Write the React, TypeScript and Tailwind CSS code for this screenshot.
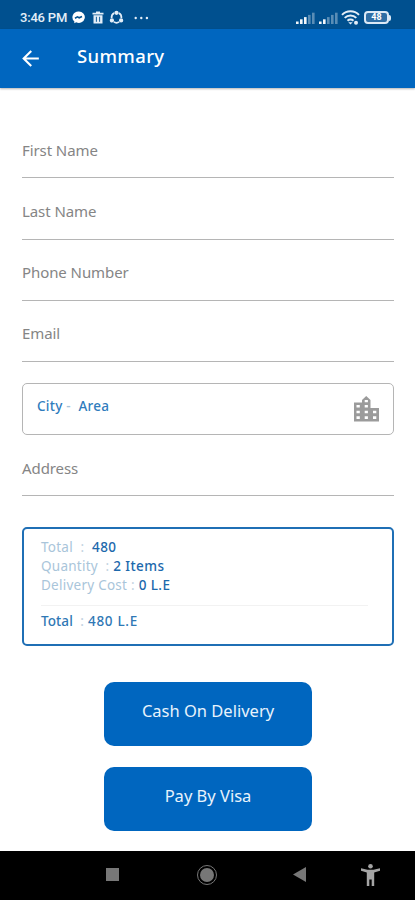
import * as React from 'react';
import { MdArrowBack } from 'react-icons/md';

function Signal({ strong }: { strong: number }) {
  return (
    <svg width="19" height="12" viewBox="0 0 19 12" fill="#fff">
      {[0, 1, 2, 3, 4].map((i) => (
        <rect key={i} x={i * 4} y={9.5 - i * 2.2} width="2.6" height={2.5 + i * 2.2} opacity={i < strong ? 0.95 : 0.35} />
      ))}
    </svg>
  );
}

function StatusBar() {
  return (
    <div className="h-[29px] bg-[#00508f] pt-[6px] pl-5 pr-[24px] flex items-center justify-between text-[#e3eef8]">
      <div className="flex items-center">
        <span className="w-[49px] whitespace-nowrap text-[13px] leading-4 font-medium font-[Roboto,sans-serif] tracking-[-0.2px]">3:46 PM</span>
        <svg className="ml-[3px]" width="13" height="13" viewBox="0 0 13 13">
          <path d="M6.5.5a6 5.7 0 0 0-4.2 9.8v2l1.9-1A6 5.7 0 1 0 6.5.5Z" fill="#fff" />
          <path d="m3 7.2 2.4-1.4 1.8 1L10 5.5" fill="none" stroke="#00508f" strokeWidth="1.6" />
        </svg>
        <svg className="ml-[7px]" width="12" height="13" viewBox="0 0 12 13" fill="currentColor">
          <path d="M4 .5h4v1.3h3.5v1.7H.5V1.8H4ZM1.5 4.2h9v8.3h-9Z" />
          <path d="M4.4 5.8v5M7.6 5.8v5" stroke="#00508f" strokeWidth="0.9" />
        </svg>
        <svg className="ml-[5px]" width="15" height="15" viewBox="0 0 15 15" fill="none" stroke="currentColor" strokeWidth="1.7">
          <path d="M5.2 3.1A5 5 0 0 0 2.6 8M9.8 3.1A5 5 0 0 1 12.4 8M4.8 11.9a5 5 0 0 0 5.4 0" />
          <circle cx="7.5" cy="2.8" r="1.3" fill="currentColor" />
          <circle cx="2.9" cy="10.4" r="1.3" fill="currentColor" />
          <circle cx="12.1" cy="10.4" r="1.3" fill="currentColor" />
        </svg>
        <svg className="ml-[10px]" width="15" height="4" viewBox="0 0 15 4" fill="currentColor">
          <circle cx="1.7" cy="2" r="1.2" />
          <circle cx="7.3" cy="2" r="1.2" />
          <circle cx="12.9" cy="2" r="1.2" />
        </svg>
      </div>
      <div className="flex items-center">
        <Signal strong={3} />
        <span className="w-1" />
        <Signal strong={2} />
        <svg className="ml-[3px]" width="19" height="15" viewBox="0 0 19 15" fill="none" stroke="currentColor" strokeWidth="2">
          <path d="M1 4.9a12 12 0 0 1 17 0M3.7 7.9a8.2 8.2 0 0 1 11.6 0M6.5 10.8a4.4 4.4 0 0 1 6 0" />
          <path d="m9.5 14.6-2.2-2.4h4.4Z" fill="currentColor" stroke="none" />
          <circle cx="15" cy="12.7" r="2" fill="currentColor" stroke="none" />
        </svg>
        <div className="ml-1 w-[25px] h-[13px] rounded-[4px] border-2 border-[#dbe9f6] bg-[#2e6ea5] flex items-center justify-center text-[9px] leading-none font-bold font-[Roboto,sans-serif] text-white">48</div>
        <div className="w-[2px] h-1.5 rounded-r bg-[#dbe9f6]" />
      </div>
    </div>
  );
}

function Field({ label }: { label: string }) {
  return (
    <div className="h-[61.25px] pt-[22.5px] border-b border-[#b5b5b5] text-[15px] leading-5 text-[#858585] tracking-[-0.08px]">
      {label}
    </div>
  );
}

function CityIcon() {
  return (
    <svg className="mb-px" width="25" height="26" viewBox="0 0 25 26" fill="#9b9b9b" fillRule="evenodd">
      <path d="M0 6.5h8V4l4.2-4 4.3 4v8H25v13.5H0ZM2.5 9v2.6h3.3V9Zm0 5.7v2.6h3.3v-2.6Zm0 5.6v2.7h3.3v-2.7ZM10.7 4v2.3h3.2V4Zm0 5v2.6h3.2V9Zm0 5.7v2.6h3.2v-2.6Zm0 5.6v2.7h3.2v-2.7Zm8.3-5.6v2.6h3.3v-2.6Zm0 5.6v2.7h3.3v-2.7Z" />
    </svg>
  );
}

function SummaryRow({ label, value, gap }: { label: string; value: string; gap: string }) {
  return (
    <div className="flex whitespace-pre">
      <span className="text-[#a9c5da] tracking-[0.25px]">{label}</span>
      <span className="text-[#c3d3df] tracking-[0.3px]">{gap}</span>
      <span className="text-[#1c69ac] font-medium tracking-[0.4px]">{value}</span>
    </div>
  );
}

export default function App() {
  return (
    <div className="w-[415px] h-[900px] bg-white flex flex-col overflow-hidden font-['Noto_Sans',sans-serif]">
      <StatusBar />
      <header className="h-[59px] shrink-0 bg-[#0066bf] flex items-center pl-[18px] text-white shadow-[0_1px_2px_rgba(0,0,0,0.3)]">
        <MdArrowBack size={25} />
        <h1 className="ml-[34px] mb-1.5 text-[18.5px] leading-6 font-medium tracking-[0.35px]">Summary</h1>
      </header>

      <main className="flex-1 pl-[22px] pr-[21px] pt-[29px] flex flex-col">
        <Field label="First Name" />
        <Field label="Last Name" />
        <Field label="Phone Number" />
        <Field label="Email" />

        <div className="mt-[21px] h-[52px] shrink-0 rounded-[5px] border border-[#b5b5b5] pl-[14px] pr-[14px] flex items-center justify-between">
          <span className="mb-1.5 whitespace-pre text-[13.5px] leading-5 font-medium text-[#2f7cbd] tracking-[0.25px]">
            City <span className="text-[#a9c5da]">-</span>{'  Area'}
          </span>
          <CityIcon />
        </div>
        <Field label="Address" />

        <section className="mt-[31px] h-[119px] shrink-0 rounded-[5px] border-2 border-[#1f6fb5] pl-[17px] pr-6 pt-[9px] text-[13.5px] leading-[19px]">
          <SummaryRow label="Total" gap="  :  " value="480" />
          <SummaryRow label="Quantity" gap="  : " value="2 Items" />
          <SummaryRow label="Delivery Cost" gap=" : " value="0 L.E" />
          <div className="mt-[10px] mb-[6px] h-px bg-[#f2f2f2]" />
          <div className="flex whitespace-pre font-medium text-[#2f78b5] tracking-[0.7px]">
            <span className="tracking-[0.1px]">Total</span>
            <span className="text-[#c3d3df] tracking-[0.2px]">{'  : '}</span>
            <span>480 L.E</span>
          </div>
        </section>

        <div className="mt-9 flex flex-col items-center gap-[21px] text-[16.5px] text-[#e8f3fc]">
          <button className="w-[208px] h-[64px] pb-1.5 rounded-[10px] bg-[#0066bf]">Cash On Delivery</button>
          <button className="w-[208px] h-[64px] pb-1.5 rounded-[10px] bg-[#0066bf]">Pay By Visa</button>
        </div>
      </main>

      <nav className="h-[49px] shrink-0 bg-black flex items-center pl-[106px] pb-[2px]">
        <div className="w-[13px] h-[13px] bg-[#777]" />
        <div className="ml-[78px] w-5 h-5 rounded-full border border-[#777] p-[2px]">
          <div className="w-full h-full rounded-full bg-[#777]" />
        </div>
        <svg className="ml-[76px]" width="13" height="15" viewBox="0 0 13 15" fill="#777">
          <path d="M13 0v15L0 7.5Z" />
        </svg>
        <svg className="ml-[55px]" width="19" height="22" viewBox="0 0 19 22" fill="#a5a5a5">
          <circle cx="9.5" cy="2.3" r="2.3" />
          <path d="M0 4.3 6.5 5.8h6L19 4.3v2.5l-5.8 1.7V22h-2.5v-6.5H8.3V22H5.8V8.5L0 6.8Z" />
        </svg>
      </nav>
    </div>
  );
}
